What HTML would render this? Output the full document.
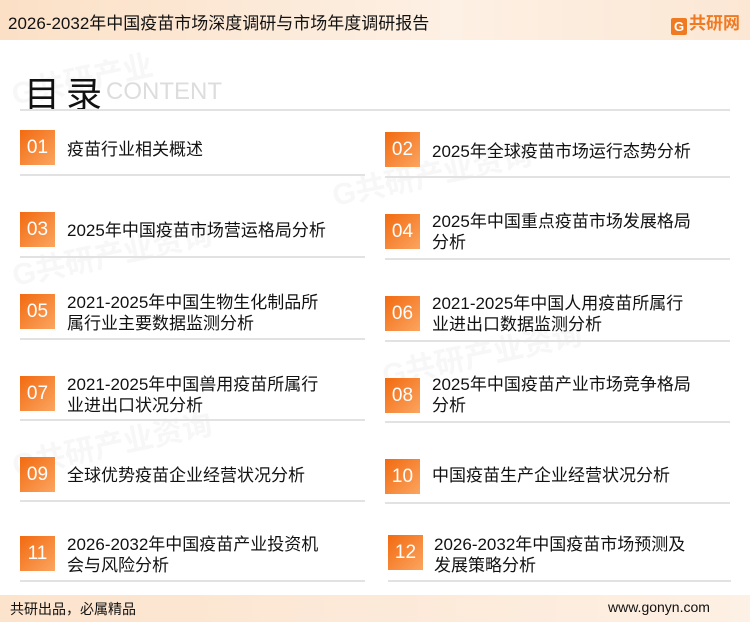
<!DOCTYPE html><html><head><meta charset="utf-8"><style>
*{margin:0;padding:0;box-sizing:border-box}
body{width:750px;height:622px;position:relative;background:#fff;font-family:"Liberation Sans","Noto Sans CJK SC",sans-serif;overflow:hidden;color:#111}
.hd{position:absolute;left:0;top:0;width:750px;height:40px;background:linear-gradient(90deg,#fbe0c6,#fdf0e4 60%,#fce7d4)}
.hd .t{position:absolute;left:8px;top:9px;font-size:17px}
.logo{position:absolute;right:10px;top:9px;font-size:17px;font-weight:bold;color:#f07a22}
.logo b{display:inline-block;width:16px;height:17px;background:#f07a22;color:#fff;font-size:13px;text-align:center;line-height:17px;margin-right:2px;vertical-align:-2px;border-radius:2px}
.ti{position:absolute;left:24px;top:66px;font-size:36px;letter-spacing:6px}
.ct{position:absolute;left:106px;top:78px;font-size:24px;color:#ddd}
.ln{position:absolute;height:2px;background:#e2e2e2}
.bd{position:absolute;width:35px;height:35px;background:linear-gradient(135deg,#f26a10,#fba560);color:#fff;font-size:19px;text-align:center;line-height:35px}
.tx{position:absolute;font-size:17px;line-height:21px;width:262px}
.ft{position:absolute;left:0;top:595px;width:750px;height:27px;background:linear-gradient(90deg,#fce3cc,#fdf0e4)}
.ft span{position:absolute;top:4px;font-size:14px}
.wm{position:absolute;color:#f7f7f7;font-size:30px;font-weight:bold;transform:rotate(-12deg);white-space:nowrap}
</style></head><body>
<div class="wm" style="left:10px;top:55px">G共研产业</div>
<div class="wm" style="left:330px;top:150px">G共研产业资询</div>
<div class="wm" style="left:10px;top:230px">G共研产业资询</div>
<div class="wm" style="left:380px;top:330px">G共研产业资询</div>
<div class="wm" style="left:10px;top:420px">G共研产业资询</div>
<div class="hd"><div class="t">2026-2032年中国疫苗市场深度调研与市场年度调研报告</div><div class="logo"><b>G</b>共研网</div></div>
<div class="ti">目录</div><div class="ct">CONTENT</div>
<div class="ln" style="left:20px;top:109px;width:710px"></div>

<div class="bd" style="left:20px;top:130px">01</div><div class="tx" style="left:67px;top:139px">疫苗行业相关概述</div>
<div class="bd" style="left:385px;top:132px">02</div><div class="tx" style="left:432px;top:141px">2025年全球疫苗市场运行态势分析</div>
<div class="ln" style="left:20px;top:174px;width:345px"></div><div class="ln" style="left:385px;top:176px;width:345px"></div>

<div class="bd" style="left:20px;top:212px">03</div><div class="tx" style="left:67px;top:220px">2025年中国疫苗市场营运格局分析</div>
<div class="bd" style="left:385px;top:214px">04</div><div class="tx" style="left:432px;top:211px">2025年中国重点疫苗市场发展格局分析</div>
<div class="ln" style="left:20px;top:256px;width:345px"></div><div class="ln" style="left:385px;top:258px;width:345px"></div>

<div class="bd" style="left:20px;top:294px">05</div><div class="tx" style="left:67px;top:292px">2021-2025年中国生物生化制品所属行业主要数据监测分析</div>
<div class="bd" style="left:385px;top:296px">06</div><div class="tx" style="left:432px;top:293px">2021-2025年中国人用疫苗所属行业进出口数据监测分析</div>
<div class="ln" style="left:20px;top:338px;width:345px"></div><div class="ln" style="left:385px;top:340px;width:345px"></div>

<div class="bd" style="left:20px;top:376px">07</div><div class="tx" style="left:67px;top:374px">2021-2025年中国兽用疫苗所属行业进出口状况分析</div>
<div class="bd" style="left:385px;top:378px">08</div><div class="tx" style="left:432px;top:374px">2025年中国疫苗产业市场竞争格局分析</div>
<div class="ln" style="left:20px;top:419px;width:345px"></div><div class="ln" style="left:385px;top:421px;width:345px"></div>

<div class="bd" style="left:20px;top:457px">09</div><div class="tx" style="left:67px;top:465px">全球优势疫苗企业经营状况分析</div>
<div class="bd" style="left:385px;top:459px">10</div><div class="tx" style="left:432px;top:465px">中国疫苗生产企业经营状况分析</div>
<div class="ln" style="left:20px;top:500px;width:345px"></div><div class="ln" style="left:385px;top:502px;width:345px"></div>

<div class="bd" style="left:20px;top:536px">11</div><div class="tx" style="left:67px;top:534px">2026-2032年中国疫苗产业投资机会与风险分析</div>
<div class="bd" style="left:388px;top:535px">12</div><div class="tx" style="left:434px;top:534px">2026-2032年中国疫苗市场预测及发展策略分析</div>
<div class="ln" style="left:20px;top:580px;width:345px"></div><div class="ln" style="left:388px;top:580px;width:343px"></div>

<div class="ft"><span style="left:10px">共研出品，必属精品</span><span style="left:608px">www.gonyn.com</span></div>
</body></html>
